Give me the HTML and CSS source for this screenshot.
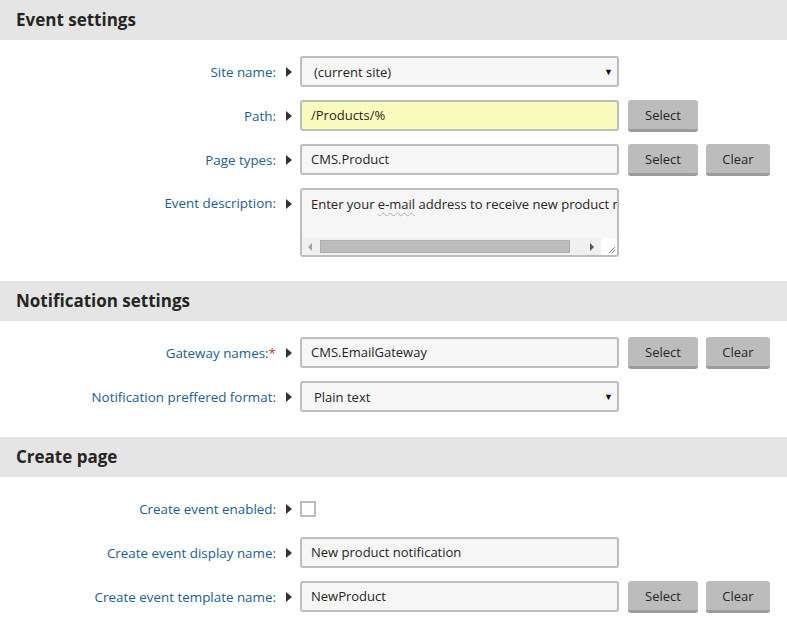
FILE: index.html
```html
<!DOCTYPE html>
<html>
<head>
<meta charset="utf-8">
<link rel="stylesheet" href="styles.css">
</head>
<body>
<div class="page">
  <h2 class="section-head">Event settings</h2>
  <div class="section-body">
    <div class="row">
      <label class="lbl">Site name:</label><span class="tri"></span>
      <div class="field select"><span>(current site)</span><span class="caret">▼</span></div>
    </div>
    <div class="row">
      <label class="lbl">Path:</label><span class="tri"></span>
      <div class="field input yellow">/Products/%</div>
      <button class="btn sel">Select</button>
    </div>
    <div class="row">
      <label class="lbl">Page types:</label><span class="tri"></span>
      <div class="field input">CMS.Product</div>
      <button class="btn sel">Select</button><button class="btn clr">Clear</button>
    </div>
    <div class="row top">
      <label class="lbl">Event description:</label><span class="tri"></span>
      <div class="field area">
        <div class="area-text">Enter your <span class="spell">e-mail</span> address to receive new product notifications</div>
        <div class="hscroll">
          <span class="arr-l"></span>
          <span class="thumb"></span>
          <span class="arr-r"></span>
          <span class="grip"><svg width="9" height="9" viewBox="0 0 9 9"><path d="M8 2 L2 8 M8 5 L5 8" stroke="#888" stroke-width="1"/></svg></span>
        </div>
      </div>
    </div>
  </div>

  <h2 class="section-head">Notification settings</h2>
  <div class="section-body mid">
    <div class="row">
      <label class="lbl">Gateway names:<span class="req">*</span></label><span class="tri"></span>
      <div class="field input">CMS.EmailGateway</div>
      <button class="btn sel">Select</button><button class="btn clr">Clear</button>
    </div>
    <div class="row">
      <label class="lbl">Notification preffered format:</label><span class="tri"></span>
      <div class="field select"><span>Plain text</span><span class="caret">▼</span></div>
    </div>
  </div>

  <h2 class="section-head">Create page</h2>
  <div class="section-body">
    <div class="row">
      <label class="lbl">Create event enabled:</label><span class="tri"></span>
      <span class="check"></span>
    </div>
    <div class="row">
      <label class="lbl">Create event display name:</label><span class="tri"></span>
      <div class="field input">New product notification</div>
    </div>
    <div class="row">
      <label class="lbl">Create event template name:</label><span class="tri"></span>
      <div class="field input">NewProduct</div>
      <button class="btn sel">Select</button><button class="btn clr">Clear</button>
    </div>
  </div>
</div>
</body>
</html>
```
FILE: styles.css
```css
* { box-sizing: border-box; }
html, body { margin: 0; padding: 0; background: #fff; }
body { font-family: "Open Sans", "Noto Sans", sans-serif; font-size: 13px; color: #262524; }
.page { width: 787px; }
.section-head {
  margin: 0;
  height: 40px;
  background: #e5e5e5;
  padding-left: 16px;
  font-size: 17px;
  font-weight: 700;
  line-height: 40px;
  color: #262524;
}
.section-body {
  padding: 16px 0 24px;
  display: flex;
  flex-direction: column;
  gap: 13px;
}
.section-body.mid { padding-bottom: 25px; }
.section-body:last-child { padding-bottom: 12px; }
.row { display: flex; align-items: center; height: 31px; }
.row.top { align-items: flex-start; height: 69px; }
.lbl {
  width: 276px;
  text-align: right;
  color: #1b5e8f;
  font-size: 13.4px;
  white-space: nowrap;
}
.row.top .lbl { padding-top: 6px; }
.req { color: #e62b2b; }
.tri {
  width: 0; height: 0;
  margin-left: 10px;
  border-top: 5px solid transparent;
  border-bottom: 5px solid transparent;
  border-left: 6px solid #333;
}
.row.top .tri { margin-top: 11px; }
.field {
  margin-left: 8px;
  width: 319px;
  height: 31px;
  border: 2px solid #bdbdbd;
  border-radius: 3px;
  background: #f6f6f6;
  color: #262524;
  white-space: nowrap;
  overflow: hidden;
}
.input { padding-left: 9px; line-height: 27px; }
.yellow { background: #f9fcbc; }
.select { display: flex; justify-content: space-between; align-items: center; padding: 0 4px 0 12px; }
.caret { font-size: 9px; color: #111; }
.area { height: 69px; position: relative; padding: 0; }
.area-text { padding: 4px 0 0 9px; line-height: 20px; }
.spell { text-decoration: underline wavy #b0b0b0; text-decoration-thickness: 1px; text-underline-offset: 3px; }
.hscroll {
  position: absolute;
  left: 0; right: 0; bottom: 0;
  height: 17px;
  background: #f0f0f0;
  display: flex;
  align-items: center;
}
.arr-l {
  margin-left: 6px;
  width: 0; height: 0;
  border-top: 4px solid transparent;
  border-bottom: 4px solid transparent;
  border-right: 4px solid #a3a3a3;
}
.thumb {
  margin-left: 8px;
  width: 250px;
  height: 13px;
  background: #bcbcbc;
  border: 1px solid #adadad;
}
.arr-r {
  margin-left: 20px;
  width: 0; height: 0;
  border-top: 4px solid transparent;
  border-bottom: 4px solid transparent;
  border-left: 4px solid #555;
}
.grip {
  margin-left: auto;
  width: 16px;
  height: 17px;
  background: #fff;
  display: flex;
  align-items: flex-end;
  justify-content: flex-end;
  padding: 0 1px 1px 0;
}
.btn {
  margin-left: 9px;
  height: 32px;
  border: none;
  border-bottom: 3px solid #9b9b9b;
  border-radius: 3px;
  background: #bcbcbc;
  font-family: inherit;
  font-size: 13px;
  color: #262524;
  padding: 1px 0 0;
  align-self: flex-start;
}
.btn.sel { width: 70px; }
.btn.clr { width: 64px; margin-left: 8px; }
.check {
  margin-left: 8px;
  width: 16px;
  height: 16px;
  border: 2px solid #bdbdbd;
  background: #fff;
}
```
